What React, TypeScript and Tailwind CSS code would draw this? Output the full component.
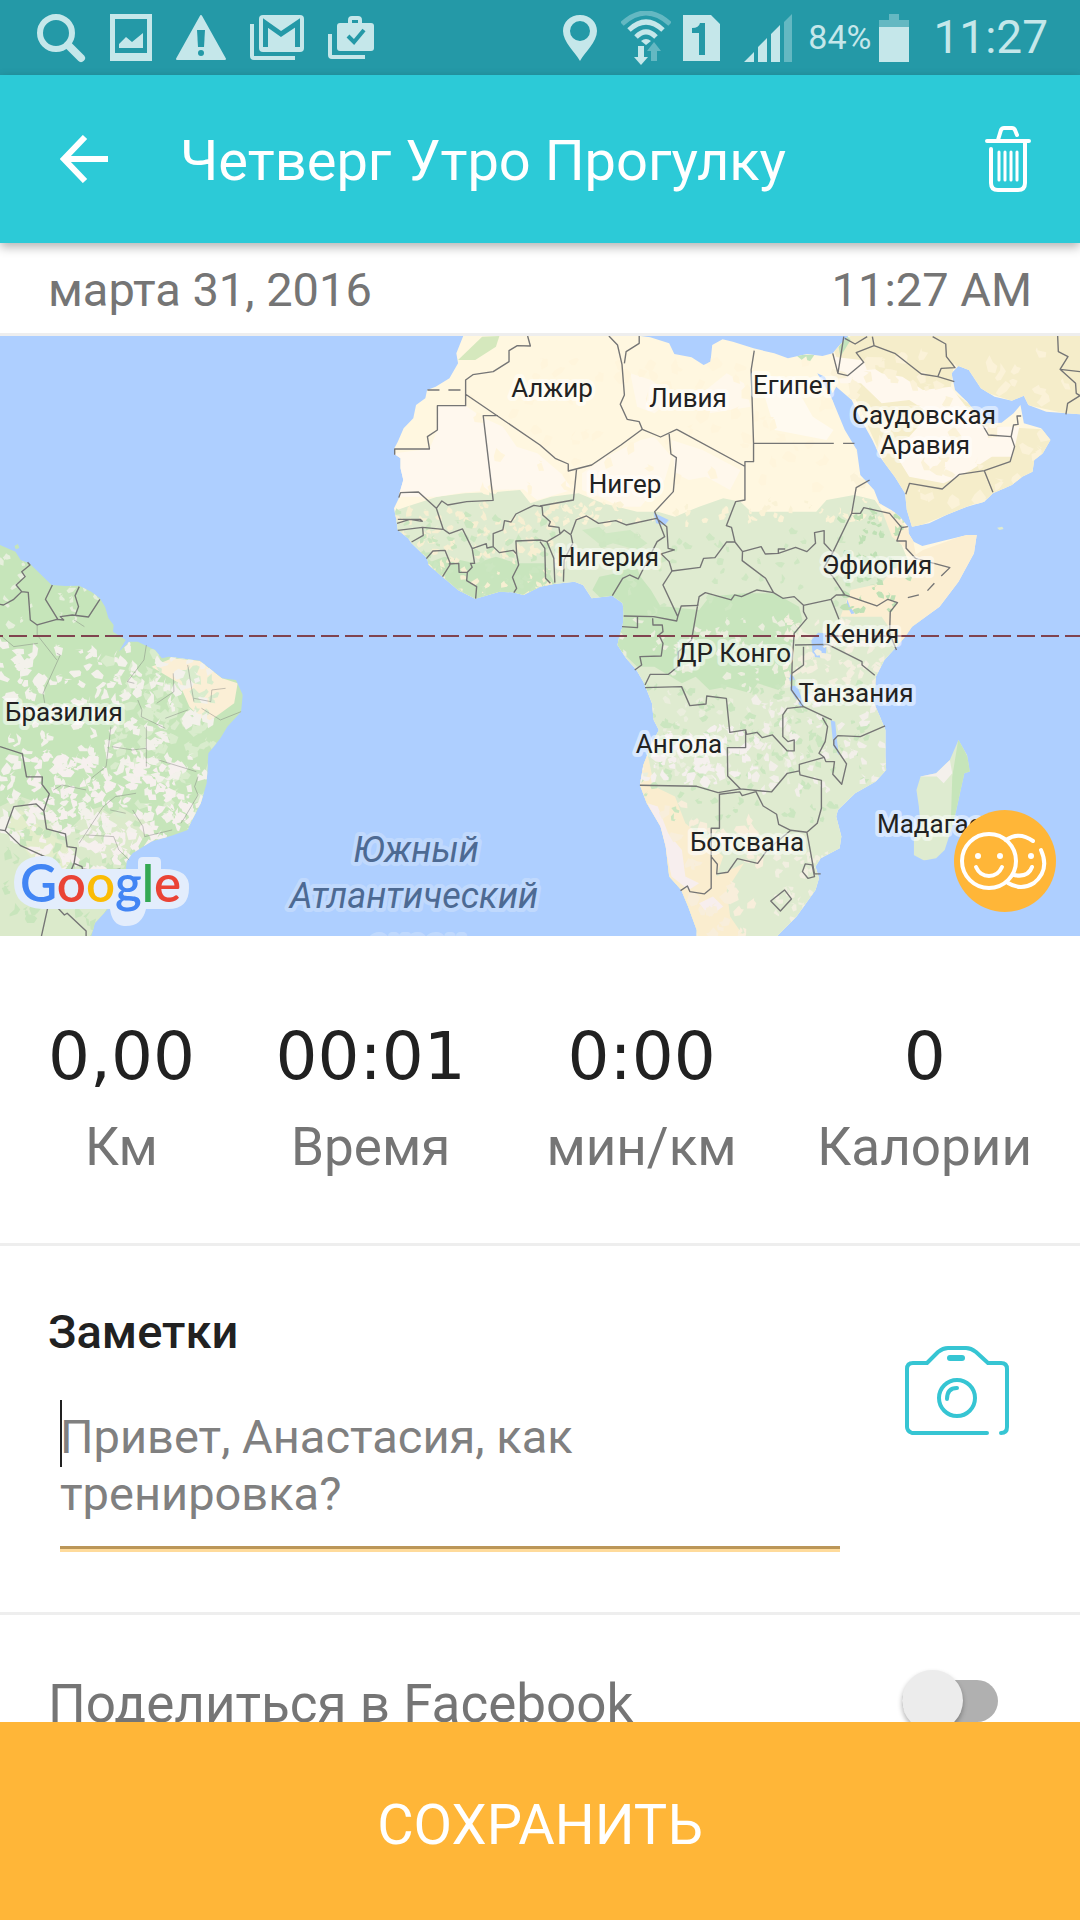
import React, { useState } from 'react'

type Label = { text: string; x: number; y: number; anchor?: 'start' | 'middle' }
type Patch = { fill: string; points: string }
type Area = { x: number; y: number; w: number; h: number; count: number; size: number; fill: string }

const stats = [
  { value: '0,00', label: 'Км' },
  { value: '00:01', label: 'Время' },
  { value: '0:00', label: 'мин/км' },
  { value: '0', label: 'Калории' }
]

const countries: Label[] = [
  { text: 'Алжир', x: 552, y: 61 },
  { text: 'Ливия', x: 688, y: 71 },
  { text: 'Египет', x: 794, y: 58 },
  { text: 'Саудовская', x: 924, y: 88 },
  { text: 'Аравия', x: 925, y: 118 },
  { text: 'Нигер', x: 625, y: 157 },
  { text: 'Нигерия', x: 608, y: 230 },
  { text: 'Эфиопия', x: 877, y: 238 },
  { text: 'Кения', x: 862, y: 307 },
  { text: 'ДР Конго', x: 734, y: 326 },
  { text: 'Танзания', x: 856, y: 366 },
  { text: 'Ангола', x: 679, y: 417 },
  { text: 'Ботсвана', x: 747, y: 515 },
  { text: 'Мадагаскар', x: 877, y: 497, anchor: 'start' },
  { text: 'Бразилия', x: 5, y: 385, anchor: 'start' }
]

const africa =
  '1345,18 1325,70 1330,100 1305,145 1265,170 1240,180 1235,205 1208,225 1200,265 1172,295 1155,335 1145,355 1145,372 1163,385 1163,415 1171,450 1160,490 1158,505 1144,535 1150,565 1155,600 1185,625 1195,640 1240,685 1245,705 1285,740 1330,780 1380,806 1400,800 1450,785 1490,787 1520,795 1568,770 1608,762 1668,755 1693,765 1718,805 1778,797 1808,820 1811,850 1808,890 1798,920 1793,945 1818,985 1848,1020 1868,1055 1878,1080 1893,1120 1898,1170 1913,1200 1893,1240 1868,1305 1858,1365 1878,1420 1918,1490 1933,1550 1943,1640 1978,1680 1998,1730 2023,1800 2023,1820 2255,1820 2313,1760 2368,1680 2378,1645 2368,1610 2383,1585 2438,1555 2443,1520 2428,1460 2433,1440 2483,1390 2543,1355 2573,1320 2571,1280 2571,1200 2553,1155 2538,1120 2543,1040 2568,990 2603,950 2628,920 2648,890 2728,830 2783,755 2828,670 2836,615 2808,615 2748,630 2678,648 2653,635 2638,610 2638,592 2613,560 2588,540 2553,520 2538,480 2498,435 2488,360 2453,300 2413,200 2373,130 2395,140 2418,190 2428,170 2473,210 2498,265 2533,330 2558,385 2598,440 2628,490 2633,540 2648,590 2698,580 2748,555 2808,530 2858,515 2883,490 2938,465 2968,440 2998,425 3003,390 3028,370 3050,330 3023,295 2973,280 2963,225 2943,250 2908,278 2858,280 2808,215 2773,180 2763,130 2783,108 2813,120 2848,175 2888,200 2938,212 2973,197 2986,225 3038,245 3136,253 3136,18 2463,18 2438,45 2418,70 2388,78 2343,72 2288,85 2248,70 2188,55 2128,35 2098,28 2068,45 2063,95 2043,105 2008,82 1958,72 1943,40 1888,22 1860,18'

const america =
  '0,645 45,665 60,690 85,700 115,730 150,765 190,768 230,767 265,785 290,805 305,830 315,865 330,885 328,905 365,930 345,965 375,935 400,935 450,960 470,985 490,980 580,992 645,1045 685,1050 705,1095 700,1145 660,1190 640,1225 605,1270 600,1360 583,1420 553,1480 545,1500 500,1517 440,1535 385,1570 367,1595 365,1630 320,1730 275,1780 265,1820 0,1820'

const madagascar =
  '2783,1230 2808,1275 2816,1325 2800,1330 2783,1410 2768,1480 2743,1560 2718,1585 2683,1592 2653,1575 2653,1530 2673,1490 2668,1430 2661,1380 2673,1340 2718,1330 2758,1290'

const africaPatches: Patch[] = [
  // savanna and everything south of the Sahel
  { fill: '#dfebd0', points: '1100,560 1180,530 1270,500 1350,490 1450,485 1510,480 1540,520 1600,500 1680,490 1750,520 1850,545 1910,545 1960,560 2030,530 2100,505 2150,515 2180,545 2290,545 2370,545 2400,510 2480,495 2540,510 2600,600 2640,700 2600,800 2680,860 2620,1820 1900,1820 1700,900 1300,900 1100,700' },
  // Sahara
  { fill: '#fff8ee', points: '1270,227 1352,227 1400,262 1460,290 1500,350 1560,370 1640,440 1660,480 1560,510 1520,478 1430,480 1340,488 1270,500 1150,500 1140,370 1247,357 1270,300' },
  { fill: '#fff8ec', points: '1690,430 1760,380 1860,330 1900,320 1950,380 1930,450 1900,480 1860,530 1800,530 1750,505 1690,480' },
  { fill: '#fff8ec', points: '1830,130 1890,150 1960,200 2050,180 2110,130 2160,160 2180,230 2060,250 1950,210 1900,250 1850,230' },
  { fill: '#fff8ec', points: '1950,330 2040,360 2150,420 2120,480 2050,440 2000,450 1960,430' },
  { fill: '#fffaf0', points: '2200,130 2300,150 2360,260 2420,300 2400,330 2250,300' },
  // horn of Africa
  { fill: '#fbeed2', points: '2440,860 2470,780 2560,760 2590,720 2680,660 2840,600 2840,700 2720,860 2620,950 2560,860' },
  { fill: '#fbeed2', points: '2560,540 2600,545 2650,620 2660,680 2590,620' },
  // Namib and Kalahari
  { fill: '#faedcf', points: '1850,1290 1880,1270 1900,1370 1960,1400 1990,1480 2060,1540 2100,1580 2080,1640 2160,1600 2110,1680 2120,1760 2160,1820 2000,1820 1900,1500 1850,1380' },
  { fill: '#f7eeee', points: '1880,1420 1910,1430 1940,1510 1980,1560 1990,1640 2030,1660 2000,1680 1950,1640 1920,1500' },
  { fill: '#f7eeee', points: '2030,1720 2070,1700 2100,1730 2060,1760' },
  // rain forest
  { fill: '#c8e5bd', points: '1790,850 1830,820 1940,830 2030,840 2060,800 2160,790 2250,790 2320,830 2330,870 2290,960 2300,1040 2260,1080 2200,1060 2180,1090 2110,1070 2060,1080 2020,1040 1980,1060 1900,1010 1850,1010 1790,950' },
  { fill: '#c8e5bd', points: '1720,780 1740,740 1790,730 1800,700 1840,690 1860,740 1890,780 1930,850 1860,870 1800,860' },
  { fill: '#c8e5bd', points: '1380,700 1440,680 1500,700 1580,700 1620,780 1500,800 1380,810 1330,790 1240,700 1290,680' },
  { fill: '#d0e8c4', points: '1690,600 1740,590 1760,610 1830,600 1880,640 1850,660 1780,640 1750,650' },
  // Arabia
  { fill: '#f5edca', points: '2420,60 2470,18 3136,18 3136,260 2960,220 2840,180 2770,100 2760,180 2900,290 3060,300 3060,400 2880,500 2640,600 2560,380' },
  { fill: '#fff8ee', points: '2420,80 2500,90 2560,130 2620,140 2680,180 2760,170 2850,290 2960,290 2940,380 2880,380 2820,420 2740,460 2640,440 2580,340 2640,320 2700,250 2640,210 2560,220 2500,160 2440,160' },
  { fill: '#c3e3bd', points: '2310,74 2365,74 2345,104' },
  { fill: '#d5e8bd', points: '1330,90 1400,20 1450,18 1440,50 1380,90' },
  { fill: '#c3e3bd', points: '2435,50 2460,18 2470,30 2440,80' },
  // lakes
  { fill: '#aecfff', points: '1898,548 1942,570 1930,586 1905,580' },
  { fill: '#aecfff', points: '2356,930 2375,908 2400,910 2398,985 2360,980' },
  { fill: '#aecfff', points: '2290,1030 2305,1040 2335,1125 2325,1130 2295,1080' },
  { fill: '#aecfff', points: '2412,1170 2425,1175 2430,1230 2436,1275 2420,1250' },
  { fill: '#aecfff', points: '2460,808 2468,830 2482,850 2472,852 2458,825' }
]

const americaPatches: Patch[] = [
  { fill: '#fbefd6', points: '440,1010 500,985 580,992 645,1045 690,1060 680,1120 640,1150 600,1180 550,1130 520,1060' },
  { fill: '#dbeacb', points: '0,1430 60,1400 140,1430 200,1500 260,1440 330,1420 380,1450 440,1480 420,1520 380,1560 320,1720 260,1820 0,1820' },
  { fill: '#e3edcb', points: '20,1480 60,1440 130,1500 210,1560 200,1640 100,1600' }
]

const africaFlecks: Area[] = [
  { x: 1150, y: 520, w: 480, h: 280, count: 120, size: 16, fill: '#f7efd2' },
  { x: 1150, y: 540, w: 480, h: 260, count: 80, size: 16, fill: '#cbe6c0' },
  { x: 1350, y: 80, w: 1050, h: 400, count: 70, size: 26, fill: '#fff5dc' },
  { x: 1630, y: 510, w: 1000, h: 60, count: 60, size: 15, fill: '#faf2d6' },
  { x: 1700, y: 600, w: 900, h: 240, count: 60, size: 16, fill: '#cfe7c3' },
  { x: 2440, y: 540, w: 200, h: 300, count: 50, size: 16, fill: '#bfe0b5' },
  { x: 1800, y: 860, w: 520, h: 480, count: 120, size: 16, fill: '#eaeedd' },
  { x: 1820, y: 1050, w: 700, h: 420, count: 150, size: 16, fill: '#cbe6c0' },
  { x: 1850, y: 1180, w: 340, h: 160, count: 80, size: 20, fill: '#f5f0ee' },
  { x: 2200, y: 1080, w: 380, h: 300, count: 60, size: 20, fill: '#f2efe9' },
  { x: 2280, y: 860, w: 320, h: 200, count: 70, size: 18, fill: '#f3efdf' },
  { x: 1900, y: 1400, w: 300, h: 420, count: 50, size: 24, fill: '#f8eedb' },
  { x: 2250, y: 1560, w: 200, h: 220, count: 50, size: 16, fill: '#f1efe0' },
  { x: 2450, y: 60, w: 650, h: 480, count: 70, size: 28, fill: '#fbf2d8' }
]

const americaFlecks: Area[] = [
  { x: 0, y: 660, w: 300, h: 230, count: 30, size: 15, fill: '#e6efdc' },
  { x: 330, y: 950, w: 300, h: 500, count: 110, size: 24, fill: '#d9eccd' },
  { x: 0, y: 1380, w: 400, h: 400, count: 90, size: 24, fill: '#c8e5bc' },
  { x: 0, y: 930, w: 620, h: 600, count: 250, size: 22, fill: '#f3f1eb' },
  { x: 80, y: 1260, w: 470, h: 370, count: 200, size: 22, fill: '#f6f0ee' }
]

const westBorders =
  'M1146,374V357H1247L1241,320 1270,300V227H1352V150L1373,134 1432,125 1478,95V62L1502,47 1540,48 1532,18 M1352,193L1568,345 1612,385 1650,402V423L1718,405 1803,345 1865,298 M1446,257H1403L1432,511 1355,515 1300,525 1283,513 1267,535 1215,486 1163,488 1158,503 M1267,535L1287,598 1227,592 1155,601 M1155,568H1220L1226,574 1190,568 1153,580 M1227,592L1229,616 1195,636 M1287,598L1305,611 1343,597 1371,656 1412,641 1414,654 1432,650 1450,668 1490,661 1500,672 M1432,650V611L1460,600 1465,572 1484,576 1498,552 1550,526 1574,530 M1371,656L1378,700H1366L1371,712 1357,727H1333L1332,700 1303,702 M1238,686L1257,663 1292,661 1308,702 1285,740 M1357,727L1355,752 1384,770 1381,806 M1588,635L1568,630 1498,633 1500,672 1506,705 1488,742 1500,775 1492,788'

const eastBorders =
  'M200,18L225,45 238,103 245,195 233,223 253,268 288,275 297,298 350,321 397,298 593,408 M288,18V40L250,65 245,100 M375,312L380,372 396,383 387,485 333,545 345,575 362,620 340,635 285,747 260,735 240,745 210,797 M106,418L97,510 0,528 M6,530L8,555 30,575 25,588 55,592 58,612 20,635 M20,635L40,685 43,758 M58,612L70,600 90,615 95,640 70,690 68,755 M0,635L14,655 16,745 30,760 M622,62L613,120 620,340H853 M880,340H913 M620,340V395H595V510L568,515 541,587 556,592 566,636 588,665 642,650 654,672 692,670V657H712 M692,670L742,652 775,665 800,640 797,608 825,602V640L850,668 905,550 918,473 957,450 M905,550H930L940,533 1015,550 1050,593 1068,590 M1050,593L1036,633H1063V655L1090,685 1190,713 1165,738 M1145,760L1125,782 M1100,795L1068,803 M90,612L105,570 135,558 170,580 220,572 250,585 338,565 368,590 372,655 390,660 352,672 375,695 383,723 357,765 400,860 410,828 460,826 M383,723L465,712 475,685 508,683 542,636H566 M588,665L587,692 655,745 678,788 705,805 738,800 765,826 845,808 860,795 885,795 850,740 825,712 850,668 M678,788L630,780 585,800 565,795 555,810 480,788 462,800 440,930 402,965 400,1010 373,1033H320L305,1065 M400,860L397,873 330,860 243,858 M283,860V893L238,890 M327,865L328,885 355,885 357,905 345,915 357,940 352,978 290,980 295,1005 275,1020 M845,808L868,868 M885,795L978,828 1010,808 1038,818 1017,845 1015,910 1035,960 M765,826V845L775,865 738,910 732,1000 730,1080 765,1130 847,1170 M740,945L835,943 935,995V1005L972,1036 M765,950V1005L732,1030 M765,1130L718,1135 705,1155V1220L720,1235 738,1230V1263H718L675,1215 645,1223 630,1207 600,1213 597,1200 551,1207 541,1105 484,1098 482,1122 435,1127 411,1070 305,1073 M597,1200V1253H544L545,1338 582,1377 517,1388 455,1369 290,1366 M582,1377L672,1386 718,1330 753,1323V1303L825,1282 830,1295H855L850,1333 876,1363 890,1302 853,1245V1230L865,1217 930,1220 1002,1188 M820,1163L835,1190 828,1235 810,1270 825,1282 M753,1323L755,1335 817,1351V1435L805,1480 775,1507 728,1501 693,1483 687,1453 648,1428 627,1385 587,1397 580,1386 521,1393V1495H497V1675L477,1692 435,1685 428,1668 408,1682 M497,1580L515,1603 513,1632 545,1627 573,1586 632,1600 660,1560 728,1501 M775,1507L797,1632H815 M770,1602L790,1605 797,1640 778,1645 762,1625Z M710,1680L730,1707 698,1743 670,1713Z M850,70L865,130 893,137 940,97 918,68 970,47 965,20 M970,47L1030,70 1107,132 1155,140 1203,155 M1155,140L1165,115 1205,113 1180,80 1178,42 1140,20 M882,20L865,130 M885,25L915,42 950,20 M1503,18L1505,65 1533,80 1510,118 1555,160 1557,190 1568,197 1532,220 1527,253 M1510,118L1568,125 M1062,493L1073,460 1168,477 1218,433 1290,422 1365,395 1378,350 1368,320 1302,315 1285,285 M1368,320L1375,285 1388,283 1385,258 1397,258 M1290,422L1315,487'

const americaBorders =
  'M80,697L87,705 63,725 73,740 47,765 63,785 82,787 88,870 108,885 165,868 185,870 175,860 210,855 257,861 290,808 M152,765L132,808 168,868 M230,770L218,797 228,830 218,858 M63,785L40,808 10,825 0,823 M0,1250L65,1272 77,1341H123L122,1363 143,1392 127,1443 135,1497 190,1512 195,1550 222,1554 215,1600 238,1610 240,1622 M0,1500L15,1502 40,1430 105,1422 127,1443 M15,1502L60,1547 130,1580 160,1610 M120,1820L140,1727 160,1725 187,1755 195,1750 250,1803V1820 M165,1725L215,1600'

const stateLines =
  'M108,885V915L165,990 M0,915L40,950 110,940 M215,870L245,890 M165,970L175,975 125,1090 130,1120 M425,945L418,990 370,1055 390,1060 M545,1005L563,1115 M563,1105L612,1115 615,1080 655,1075 M503,1030L505,1085 455,1120 M400,1110L412,1140 410,1160 480,1195 M545,1140L480,1165 M585,1135L640,1170 700,1145 M322,1190L308,1310 265,1345 M325,1250L385,1260 425,1255 M425,1190V1310 M460,1290L570,1325 M155,1380L180,1365 250,1380 M395,1390L335,1400 300,1430 230,1540 M575,1340L565,1370 575,1395 535,1465 525,1480 M385,1440L415,1490 420,1520 500,1500 M320,1440L365,1450 M250,1515L330,1520 345,1560 375,1590 M240,1615L300,1630 350,1615'

// small angular flecks of vegetation, the same on every render
function flecks(area: Area, seed: number) {
  let s = seed
  const rnd = () => {
    s = (s * 16807) % 2147483647
    return s / 2147483647
  }
  let d = ''
  for (let i = 0; i < area.count; i++) {
    const x = area.x + rnd() * area.w
    const y = area.y + rnd() * area.h
    d += `M${x.toFixed(0)},${y.toFixed(0)}`
    for (let k = 0; k < 5; k++) {
      const angle = k * 1.25 + rnd()
      const step = area.size * (0.3 + rnd() * 0.8)
      d += `l${(Math.cos(angle) * step).toFixed(0)},${(Math.sin(angle) * step).toFixed(0)}`
    }
    d += 'Z'
  }
  return d
}

function MapView() {
  return (
    <svg viewBox="0 0 1080 600" preserveAspectRatio="xMidYMid slice" className="block h-[600px] w-full bg-[#aecfff]" role="img" aria-label="Карта">
      <defs>
        <clipPath id="africa"><polygon points={africa} /></clipPath>
        <clipPath id="america"><polygon points={america} /></clipPath>
        <clipPath id="madagascar"><polygon points={madagascar} /></clipPath>
      </defs>

      {/* Land */}
      <g transform="translate(0 -6) scale(0.3444 0.3333)">
        <g clipPath="url(#africa)">
          <rect x="1100" width="2100" height="1830" fill="#fff7e0" />
          {africaPatches.map((patch, index) => <polygon key={index} points={patch.points} fill={patch.fill} />)}
          {africaFlecks.map((area, index) => <path key={index} d={flecks(area, 77 + index * 31)} fill={area.fill} />)}
        </g>
        <g clipPath="url(#america)">
          <rect y="600" width="760" height="1230" fill="#c6e5ba" />
          {americaPatches.map((patch, index) => <polygon key={index} points={patch.points} fill={patch.fill} />)}
          {americaFlecks.map((area, index) => <path key={index} d={flecks(area, 913 + index * 53)} fill={area.fill} />)}
        </g>
        <g clipPath="url(#madagascar)">
          <rect x="2600" y="1200" width="300" height="420" fill="#deebd0" />
          <polygon points="2783,1225 2830,1325 2790,1400 2760,1500 2765,1340" fill="#c6e5ba" />
          <polygon points="2670,1340 2758,1290 2765,1330 2740,1360 2720,1340" fill="#f4f0ec" />
        </g>
        <polygon points="2895,593 2910,590 2914,597 2902,600" fill="#dfebd0" />
        <polygon points="42,648 52,642 56,654 46,658" fill="#c6e5ba" />

        {/* Borders */}
        <g fill="none" stroke="#757575">
          <path d={stateLines} strokeWidth="2" opacity="0.6" />
          <g strokeWidth="4" strokeLinejoin="round">
            <path d={westBorders} />
            <path d={americaBorders} />
            <path d="M1241,180H1340" strokeDasharray="35 26" />
            <path d={eastBorders} transform="translate(1568 0)" />
          </g>
        </g>
      </g>

      <path d="M-15 300H1080" stroke="#80434f" strokeWidth="2" strokeDasharray="18 6" />

      {/* Labels */}
      <g fontSize="26" fill="#222222" stroke="#ffffff" strokeOpacity="0.5" strokeWidth="8" strokeLinejoin="round" paintOrder="stroke">
        {countries.map((country) => (
          <text key={country.text} x={country.x} y={country.y} textAnchor={country.anchor ?? 'middle'}>{country.text}</text>
        ))}
      </g>
      <g fontSize="36" fontStyle="italic" fill="#4d6a93" stroke="#c0d9fd" strokeWidth="8" strokeLinejoin="round" paintOrder="stroke" textAnchor="middle">
        <text x="416" y="526">Южный</text>
        <text x="414" y="572">Атлантический</text>
        <text x="416" y="620">океан</text>
      </g>
      <path d="M42 520Q56 519 62 533H138V526Q138 521 143 521H156Q161 521 161 526V533Q190 532 189 552Q189 573 168 573H146Q142 591 124 590Q112 589 110 573H42Q14 571 14 546Q15 521 42 520Z" fill="#e3edfc" />
      <text x="20" y="566" fontSize="51" fontWeight="600" fontFamily="Lato, sans-serif">
        <tspan fill="#4285f4">G</tspan><tspan fill="#ea4335">o</tspan><tspan fill="#fbbc05">o</tspan><tspan fill="#4285f4">g</tspan><tspan fill="#34a853">l</tspan><tspan fill="#ea4335">e</tspan>
      </text>
    </svg>
  )
}

function StatusBar() {
  return (
    <div className="flex h-[75px] shrink-0 items-center justify-between bg-[#2499a7] pl-9 pr-8 text-[#c5e7ea]">
      <div className="flex items-center gap-6">
        <svg width="50" height="50" viewBox="0 0 50 50" fill="none" stroke="currentColor">
          <circle cx="20" cy="20" r="16" strokeWidth="6" />
          <path d="M32 32L45 45" strokeWidth="8" strokeLinecap="round" />
        </svg>
        <svg width="42" height="47" viewBox="0 0 42 47" fill="currentColor">
          <path fillRule="evenodd" d="M0 0H42V47H0ZM5 5V39H37V5Z" />
          <path d="M9 34V30L16 23L22 28L33 19V34Z" />
        </svg>
        <svg width="50" height="45" viewBox="0 0 50 45">
          <path d="M25 1L49 44H1Z" fill="currentColor" stroke="currentColor" strokeWidth="2" strokeLinejoin="round" />
          <path d="M21 15H29L28 32H22Z" fill="#2499a7" />
          <circle cx="25" cy="38" r="3" fill="#2499a7" />
        </svg>
        <svg width="54" height="46" viewBox="0 0 54 46">
          <rect x="9" y="0" width="45" height="37" rx="4" fill="currentColor" />
          <path d="M15.5 32V8L31 19L47.5 8V32" fill="none" stroke="#2499a7" strokeWidth="5" />
          <path d="M2 9V41Q2 43 4 43H45" fill="none" stroke="currentColor" strokeWidth="4" />
        </svg>
        <svg width="46" height="44" viewBox="0 0 46 44">
          <rect x="9" y="7" width="37" height="28" rx="3" fill="currentColor" />
          <path d="M22 8V4Q22 2 24 2H30Q32 2 32 4V8" fill="none" stroke="currentColor" strokeWidth="4" />
          <path d="M20 20L26 26L36 14" fill="none" stroke="#2499a7" strokeWidth="4" />
          <path d="M2 18V39Q2 41 4 41H37" fill="none" stroke="currentColor" strokeWidth="4" />
        </svg>
      </div>
      <div className="flex items-center gap-6">
        <svg width="34" height="46" viewBox="0 0 34 46" fill="currentColor">
          <path fillRule="evenodd" d="M17 0C7 0 0 7 0 16C0 27 12 37 17 46C22 37 34 27 34 16C34 7 27 0 17 0ZM17 6A10 10 0 1 1 17 26A10 10 0 1 1 17 6Z" />
        </svg>
        <div className="flex items-center gap-3">
          <svg width="50" height="54" viewBox="0 0 50 54" fill="none">
            <path d="M1 13Q25 -9 49 13" stroke="currentColor" strokeWidth="5" opacity="0.4" />
            <path d="M8 19Q25 3 42 19M15 26Q25 16 35 26" stroke="currentColor" strokeWidth="5" />
            <path d="M20 30Q25 26 30 30L25 34Z" fill="currentColor" />
            <path d="M17 35H23V46H27L20 54L13 46H17Z" fill="currentColor" />
            <path d="M30 50H36V40H40L33 31L26 40H30Z" fill="currentColor" opacity="0.4" />
          </svg>
          <svg width="37" height="46" viewBox="0 0 37 46" fill="currentColor">
            <path fillRule="evenodd" d="M0 0H28L37 9V46H0ZM17 8Q16 13 9 13V18H16V40H22V8Z" />
          </svg>
        </div>
        <div className="flex items-center gap-4">
          <svg width="48" height="48" viewBox="0 0 48 48" fill="currentColor">
            <path d="M0 48L10 38V48ZM14 33L23 24V48H14ZM27 20L36 11V48H27Z" />
            <path d="M40 8L48 0V48H40Z" opacity="0.4" />
          </svg>
          <div className="flex items-center gap-2">
            <span className="text-[34px]">84%</span>
            <svg width="30" height="48" viewBox="0 0 30 48" fill="currentColor">
              <path d="M0 6H10V0H20V6H30V13H0Z" opacity="0.4" />
              <path d="M0 13H30V48H0Z" />
            </svg>
          </div>
        </div>
        <span className="text-[46px]">11:27</span>
      </div>
    </div>
  )
}

export default function App() {
  const [notes, setNotes] = useState('')
  const [shared, setShared] = useState(false)

  return (
    <div className="flex h-screen w-full flex-col overflow-hidden bg-white font-[Roboto,sans-serif] text-[#757575]">
      <StatusBar />

      {/* App bar */}
      <header className="relative z-10 flex h-[168px] shrink-0 items-center bg-[#2ccad7] pl-[60px] pr-10 text-white shadow-[0_4px_10px_rgba(0,0,0,0.3)]">
        <button type="button" aria-label="Назад" className="mr-[72px]">
          <svg width="48" height="48" viewBox="0 0 48 48" fill="none" stroke="currentColor" strokeWidth="6">
            <path d="M25 2L4 24L25 46M4 24H48" />
          </svg>
        </button>
        <h1 className="flex-1 pt-1 text-[56px]">Четверг Утро Прогулку</h1>
        <button type="button" aria-label="Удалить" className="mr-2">
          <svg width="48" height="66" viewBox="0 0 48 66" fill="none" stroke="currentColor" strokeWidth="4" strokeLinecap="round">
            <path d="M3 15H45M14 14L17 4Q18 2 20 2H28Q30 2 31 4L33 9" />
            <path d="M7 23V57Q7 64 14 64H34Q41 64 41 57V16" />
            <path d="M15 26V54M21 26V54M27 26V54M33 26V54" strokeWidth="3" />
          </svg>
        </button>
      </header>

      <main className="min-h-0 flex-1 overflow-hidden">
        <div className="flex h-[93px] items-center justify-between border-b-[3px] border-[#eeeeee] px-12 pt-1 text-[47px]">
          <span>марта 31, 2016</span>
          <span>11:27 AM</span>
        </div>

        <div className="relative">
          <MapView />
          <button type="button" aria-label="Друзья" className="absolute bottom-6 right-6 h-[102px] w-[102px] rounded-full bg-[#ffb638]">
            <svg viewBox="0 0 102 102" fill="none" stroke="#ffffff" strokeWidth="4" strokeLinecap="round">
              <circle cx="35" cy="51" r="27" />
              <path d="M22 57Q26 66 35 66Q44 66 48 57" />
              <path d="M52 30Q65 21 79 31M87 40Q96 60 80 73Q67 81 54 73M60 65Q74 68 78 57" />
              <circle cx="24" cy="46" r="3" fill="#ffffff" stroke="none" />
              <circle cx="46" cy="46" r="3" fill="#ffffff" stroke="none" />
              <circle cx="77" cy="46" r="3" fill="#ffffff" stroke="none" />
            </svg>
          </button>
        </div>

        {/* Workout stats */}
        <dl className="flex h-[310px] justify-between border-b-[3px] border-[#eeeeee] px-12 pt-[75px]">
          {stats.map((stat) => (
            <div key={stat.label} className="flex flex-col-reverse items-center justify-end">
              <dt className="text-[53px] leading-[88px]">{stat.label}</dt>
              <dd className="font-['DejaVu_Sans',sans-serif] text-[66px] leading-[92px] text-[#212121]">{stat.value}</dd>
            </div>
          ))}
        </dl>

        {/* Notes */}
        <section className="flex h-[369px] items-start justify-between border-b-[3px] border-[#eeeeee] pl-12 pr-[70px] pt-[54px]">
          <div className="flex-1">
            <label htmlFor="notes" className="block text-[47px] font-medium leading-[64px] text-[#212121]">Заметки</label>
            <div className="relative ml-3 mr-16 mt-9 border-b-[3px] border-[#ffdb9b]">
              <textarea
                id="notes"
                rows={2}
                value={notes}
                onChange={(e) => setNotes(e.target.value)}
                placeholder="Привет, Анастасия, как тренировка?"
                className="block h-[149px] w-full resize-none border-b-[3px] border-[#bb9658] pt-2 text-[47px] leading-[57px] text-[#212121] outline-none placeholder:text-[#808080]"
              />
              <span className="absolute left-0 top-0 h-[67px] w-0.5 bg-[#212121]" />
            </div>
          </div>
          <button type="button" aria-label="Добавить фото" className="mt-[45px] text-[#36c5d3]">
            <svg width="106" height="92" viewBox="0 0 106 92" fill="none" stroke="currentColor" strokeWidth="4" strokeLinecap="round" strokeLinejoin="round">
              <path d="M83 88H8Q3 86 3 82V24Q3 18 9 18H23L34 7Q39 3 44 3H62Q67 3 72 7L84 18H97Q103 18 103 24V82Q103 88 97 88" />
              <circle cx="53" cy="53" r="18" />
              <path d="M43 54Q43 43 53 43" />
              <path d="M46 13H58" strokeWidth="6" />
            </svg>
          </button>
        </section>

        <div className="flex h-[172px] items-center justify-between pl-12 pr-[82px]">
          <label htmlFor="facebook" className="pt-2 text-[53px]">Поделиться в Facebook</label>
          <input
            id="facebook"
            type="checkbox"
            role="switch"
            checked={shared}
            onChange={(e) => setShared(e.target.checked)}
            className="relative h-[42px] w-24 appearance-none rounded-full bg-[#b0b0b0] before:absolute before:-top-2.5 before:left-0 before:h-[61px] before:w-[61px] before:rounded-full before:bg-[#ececec] before:shadow-[0_3px_5px_rgba(0,0,0,0.3)] checked:bg-[#8fdde4] checked:before:left-[35px]"
          />
        </div>
      </main>

      <button type="button" className="h-[198px] shrink-0 bg-[#ffb638] pt-2 text-[56px] text-white">СОХРАНИТЬ</button>
    </div>
  )
}
